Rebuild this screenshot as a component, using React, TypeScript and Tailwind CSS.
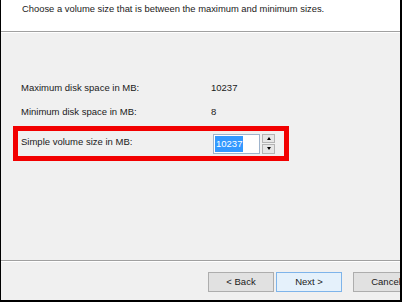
export default function App() {
  return (
    <div
      className="w-[402px] h-[302px] overflow-hidden flex flex-col border-l border-r-2 border-b-2 border-black bg-[#f0f0f0] text-[#1a1a1a]"
      style={{ fontFamily: '"Liberation Sans", Arial, sans-serif' }}
    >
      {/* header */}
      <div className="h-[31px] shrink-0 bg-white pl-[21px] pt-[3px] text-[9.4px] leading-[12px]">
        Choose a volume size that is between the maximum and minimum sizes.
      </div>
      <div className="h-px shrink-0 bg-[#a0a0a0]" />
      <div className="h-px shrink-0 bg-white" />

      {/* body */}
      <div className="flex-1 flex flex-col pt-[44px] text-[9.5px]">
        <div className="h-[22px] flex items-center pl-[20px]">
          <span className="w-[190px]">Maximum disk space in MB:</span>
          <span>10237</span>
        </div>
        <div className="h-[22px] mt-[2px] flex items-center pl-[20px]">
          <span className="w-[190px]">Minimum disk space in MB:</span>
          <span>8</span>
        </div>

        <div className="mt-[3px] ml-[12px] w-[276px] h-[35px] border-[5px] border-[#f20000] flex items-center pl-[3px]">
          <span className="w-[192px] -mt-[3px]">Simple volume size in MB:</span>
          <div className="w-[47px] h-[20px] bg-white border border-[#9fb4cc] flex items-center pl-[1px]">
            <span className="bg-[#3399ff] text-white leading-[16px] px-[1px]">10237</span>
          </div>
          <div className="ml-[2px] w-[13px] h-[20px] flex flex-col gap-px">
            <div className="flex-1 bg-[#e6e6e6] border border-[#b4b4b4] flex items-center justify-center">
              <div className="w-0 h-0 border-l-[2.5px] border-r-[2.5px] border-b-[3px] border-l-transparent border-r-transparent border-b-black" />
            </div>
            <div className="flex-1 bg-[#e6e6e6] border border-[#b4b4b4] flex items-center justify-center">
              <div className="w-0 h-0 border-l-[2.5px] border-r-[2.5px] border-t-[3px] border-l-transparent border-r-transparent border-t-black" />
            </div>
          </div>
        </div>
      </div>

      {/* footer */}
      <div className="h-px shrink-0 bg-[#a0a0a0]" />
      <div className="h-px shrink-0 bg-white" />
      <div className="h-[38px] shrink-0 flex pt-[10px] pl-[207px] text-[9.5px]">
        <button className="w-[66px] h-[20px] shrink-0 bg-[#e1e1e1] border border-[#adadad]">
          &lt; Back
        </button>
        <button className="ml-[2px] w-[66px] h-[20px] shrink-0 bg-[#e5f1fb] border border-[#7eb4ea]">
          Next &gt;
        </button>
        <button className="ml-[11px] w-[66px] h-[20px] shrink-0 bg-[#e1e1e1] border border-[#adadad]">
          Cancel
        </button>
      </div>
    </div>
  );
}
